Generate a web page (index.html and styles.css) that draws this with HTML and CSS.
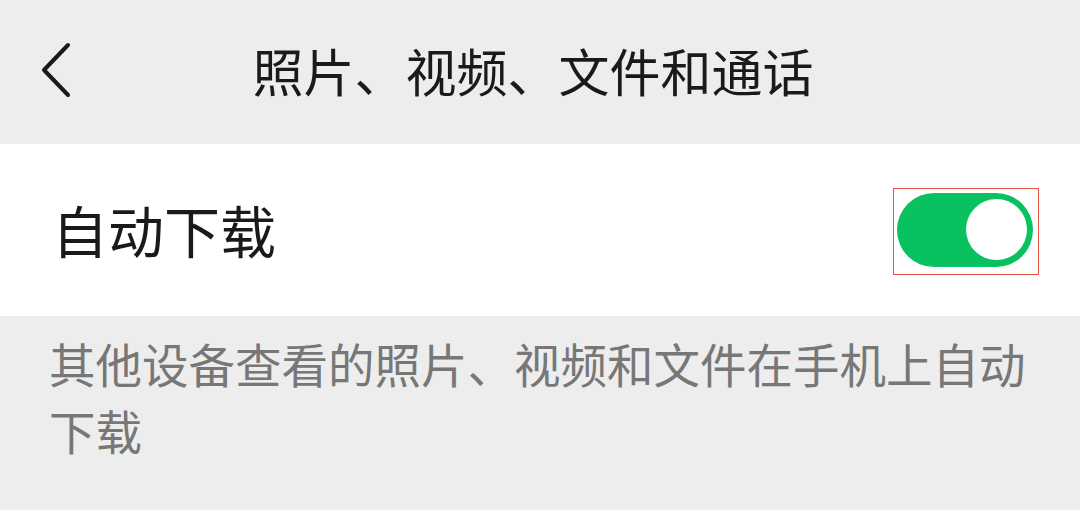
FILE: index.html
```html
<!DOCTYPE html>
<html lang="zh-CN">
<head>
  <meta charset="UTF-8">
  <title>照片、视频、文件和通话</title>
  <link rel="stylesheet" href="styles.css">
</head>
<body>

  <!-- Top bar -->
  <div class="topbar">
    <button class="back-btn" aria-label="返回">
      <svg width="34" height="56" viewBox="0 0 34 56">
        <polyline points="28,3 4,28 28,53" fill="none" stroke="#1a1a1a" stroke-width="4" stroke-linecap="round" stroke-linejoin="round"/>
      </svg>
    </button>
    <div class="title">照片、视频、文件和通话</div>
    <div></div>
  </div>

  <!-- Setting row -->
  <div class="setting-row">
    <div class="setting-label">自动下载</div>
    <div class="switch-frame">
      <div class="switch on">
        <div class="knob"></div>
      </div>
    </div>
  </div>

  <p class="hint">其他设备查看的照片、视频和文件在手机上自动下载</p>

</body>
</html>
```

FILE: styles.css
```css
* {
  margin: 0;
  padding: 0;
  box-sizing: border-box;
}

body {
  width: 1080px;
  height: 510px;
  font-family: "Noto Sans CJK SC", "Noto Sans", sans-serif;
  background-color: #ededed;
  color: #1a1a1a;
  overflow: hidden;
}

.topbar {
  height: 144px;
  display: grid;
  grid-template-columns: 1fr auto 1fr;
  align-items: center;
  padding: 0 14px 4px 0;
}

.back-btn {
  justify-self: start;
  margin-left: 40px;
  background: none;
  border: none;
  display: flex;
  align-items: center;
}

.title {
  font-size: 51px;
  font-weight: 400;
  color: #1a1a1a;
}

.setting-row {
  height: 172px;
  background-color: #ffffff;
  display: flex;
  justify-content: space-between;
  align-items: center;
  padding: 0 41px 0 52px;
}

.setting-label {
  font-size: 56px;
  font-weight: 400;
  padding-bottom: 4px;
}

.switch-frame {
  width: 146px;
  height: 87px;
  border: 1.5px solid #e2543e;
  padding: 4px 5px 0 3px;
  margin-top: 2px;
}

.switch {
  width: 136px;
  height: 74px;
  border-radius: 37px;
  background-color: #0ac160;
  display: flex;
  align-items: center;
  justify-content: flex-end;
  padding: 0 6px;
}

.knob {
  width: 61px;
  height: 61px;
  border-radius: 50%;
  background-color: #ffffff;
}

.hint {
  font-size: 46.5px;
  line-height: 67px;
  color: #777777;
  padding: 13px 20px 0 49px;
}
```
